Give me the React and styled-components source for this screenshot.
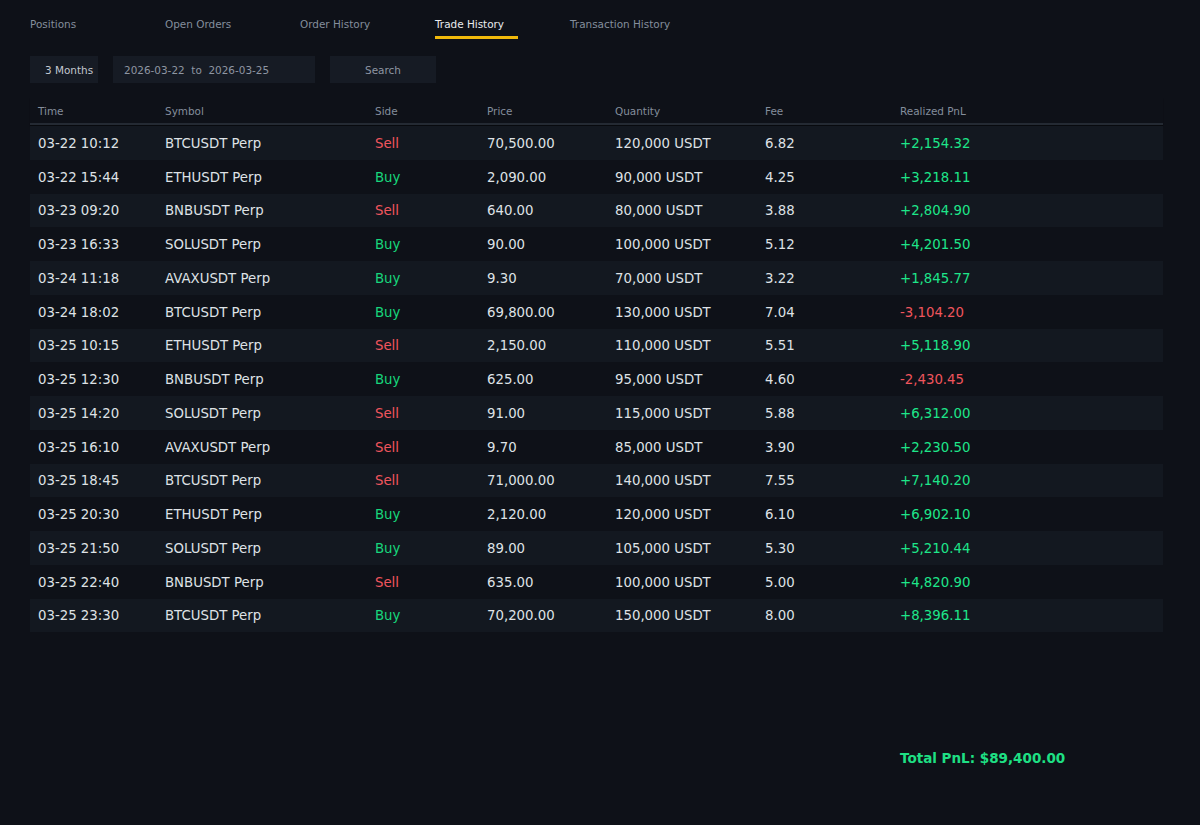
import React from 'react'
import styled, { createGlobalStyle } from 'styled-components'

const GlobalStyle = createGlobalStyle`
  html, body {
    margin: 0;
    padding: 0;
    background: #0e1118;
  }
  body {
    font-family: 'DejaVu Sans', 'Liberation Sans', sans-serif;
  }
`

const COLUMNS = '127px 210px 112px 128px 150px 135px 1fr'

const Page = styled.div`
  min-height: 825px;
  padding: 0 37px 0 30px;
  box-sizing: border-box;
  color: #dfe2e6;
`

const Tabs = styled.nav`
  display: flex;
  padding-top: 18px;
`

const Tab = styled.div`
  width: 135px;
  font-size: 10.45px;
  color: ${p => (p.active ? '#eaecef' : '#848e9c')};

  span {
    display: inline-block;
    padding: 0 14px 6px 0;
    border-bottom: 3px solid ${p => (p.active ? '#f0b90b' : 'transparent')};
  }
`

const Filters = styled.div`
  display: flex;
  gap: 15px;
  margin-top: 17px;
`

const FilterBox = styled.div`
  height: 27px;
  display: flex;
  align-items: center;
  justify-content: ${p => (p.center ? 'center' : 'flex-start')};
  width: ${p => p.width}px;
  padding: 0 0 0 ${p => p.pad || 0}px;
  box-sizing: border-box;
  background: #161b24;
  font-size: 10.45px;
  color: ${p => p.color || '#a4abb6'};
  white-space: pre;
`

const Table = styled.div`
  margin-top: 15px;
`

const HeaderRow = styled.div`
  display: grid;
  grid-template-columns: ${COLUMNS};
  height: 25px;
  align-items: center;
  border-bottom: 2px solid #242a33;
  box-shadow: 0 1px 1px rgba(0, 0, 0, 0.4);
  font-size: 10.45px;
  color: #848e9c;
  margin-bottom: 1px;
`

const Row = styled.div`
  display: grid;
  grid-template-columns: ${COLUMNS};
  height: 33.75px;
  align-items: center;
  background: ${p => (p.odd ? '#131820' : 'transparent')};
  font-size: 13.3px;
`

const Cell = styled.div`
  padding-left: 8px;
  padding-top: 1px;
  color: ${p => p.color || 'inherit'};
`

const Footer = styled.div`
  display: grid;
  grid-template-columns: ${COLUMNS};
  margin-top: 118px;
`

const Total = styled.div`
  grid-column: 7;
  padding-left: 8px;
  font-size: 13.5px;
  font-weight: bold;
  color: #1ee084;
`

const RED = '#f0555d'
const GREEN = '#17d77c'
const PNL_GREEN = '#1ee68a'

const trades = [
  ['03-22 10:12', 'BTCUSDT Perp', 'Sell', '70,500.00', '120,000 USDT', '6.82', '+2,154.32'],
  ['03-22 15:44', 'ETHUSDT Perp', 'Buy', '2,090.00', '90,000 USDT', '4.25', '+3,218.11'],
  ['03-23 09:20', 'BNBUSDT Perp', 'Sell', '640.00', '80,000 USDT', '3.88', '+2,804.90'],
  ['03-23 16:33', 'SOLUSDT Perp', 'Buy', '90.00', '100,000 USDT', '5.12', '+4,201.50'],
  ['03-24 11:18', 'AVAXUSDT Perp', 'Buy', '9.30', '70,000 USDT', '3.22', '+1,845.77'],
  ['03-24 18:02', 'BTCUSDT Perp', 'Buy', '69,800.00', '130,000 USDT', '7.04', '-3,104.20'],
  ['03-25 10:15', 'ETHUSDT Perp', 'Sell', '2,150.00', '110,000 USDT', '5.51', '+5,118.90'],
  ['03-25 12:30', 'BNBUSDT Perp', 'Buy', '625.00', '95,000 USDT', '4.60', '-2,430.45'],
  ['03-25 14:20', 'SOLUSDT Perp', 'Sell', '91.00', '115,000 USDT', '5.88', '+6,312.00'],
  ['03-25 16:10', 'AVAXUSDT Perp', 'Sell', '9.70', '85,000 USDT', '3.90', '+2,230.50'],
  ['03-25 18:45', 'BTCUSDT Perp', 'Sell', '71,000.00', '140,000 USDT', '7.55', '+7,140.20'],
  ['03-25 20:30', 'ETHUSDT Perp', 'Buy', '2,120.00', '120,000 USDT', '6.10', '+6,902.10'],
  ['03-25 21:50', 'SOLUSDT Perp', 'Buy', '89.00', '105,000 USDT', '5.30', '+5,210.44'],
  ['03-25 22:40', 'BNBUSDT Perp', 'Sell', '635.00', '100,000 USDT', '5.00', '+4,820.90'],
  ['03-25 23:30', 'BTCUSDT Perp', 'Buy', '70,200.00', '150,000 USDT', '8.00', '+8,396.11'],
]

const tabs = ['Positions', 'Open Orders', 'Order History', 'Trade History', 'Transaction History']
const headers = ['Time', 'Symbol', 'Side', 'Price', 'Quantity', 'Fee', 'Realized PnL']

export default function App() {
  return (
    <Page>
      <GlobalStyle />
      <Tabs>
        {tabs.map(t => (
          <Tab key={t} active={t === 'Trade History'}>
            <span>{t}</span>
          </Tab>
        ))}
      </Tabs>

      <Filters>
        <FilterBox width={68} pad={15} color="#c3c8d0">3 Months</FilterBox>
        <FilterBox width={202} pad={11} color="#8e96a2">2026-03-22  to  2026-03-25</FilterBox>
        <FilterBox width={106} center color="#8e96a2">Search</FilterBox>
      </Filters>

      <Table>
        <HeaderRow>
          {headers.map(h => <Cell key={h}>{h}</Cell>)}
        </HeaderRow>
        {trades.map((r, i) => (
          <Row key={i} odd={i % 2 === 0}>
            <Cell>{r[0]}</Cell>
            <Cell>{r[1]}</Cell>
            <Cell color={r[2] === 'Sell' ? RED : GREEN}>{r[2]}</Cell>
            <Cell>{r[3]}</Cell>
            <Cell>{r[4]}</Cell>
            <Cell>{r[5]}</Cell>
            <Cell color={r[6].startsWith('-') ? RED : PNL_GREEN}>{r[6]}</Cell>
          </Row>
        ))}
      </Table>

      <Footer>
        <Total>Total PnL: $89,400.00</Total>
      </Footer>
    </Page>
  )
}
